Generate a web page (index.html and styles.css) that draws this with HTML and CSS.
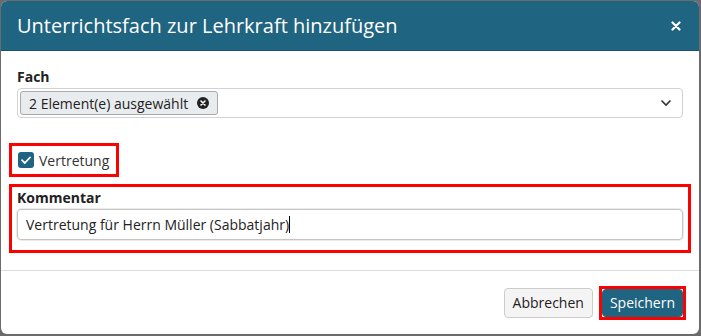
FILE: index.html
```html
<!DOCTYPE html>
<html>

<head>
  <meta charset="UTF-8">
  <title>Unterrichtsfach zur Lehrkraft hinzufügen</title>
  <link rel="stylesheet" href="styles.css">
</head>

<body>
  <div class="modal">
    <div class="modal-header">
      <h4 class="modal-title">Unterrichtsfach zur Lehrkraft hinzufügen</h4>
      <svg class="close" width="10" height="10" viewBox="0 0 10 10">
        <path d="M1.5 1.5 L8.5 8.5 M8.5 1.5 L1.5 8.5" stroke="#fff" stroke-width="2.2" stroke-linecap="round"/>
      </svg>
    </div>

    <div class="modal-body">
      <!-- Fach -->
      <div class="form-group">
        <label class="label">Fach</label>
        <div class="select">
          <span class="chip">2 Element(e) ausgewählt
            <svg class="chip-remove" width="12" height="12" viewBox="0 0 12 12">
              <circle cx="6" cy="6" r="6" fill="#222"/>
              <path d="M4 4 L8 8 M8 4 L4 8" stroke="#fff" stroke-width="1.6" stroke-linecap="round"/>
            </svg>
          </span>
          <svg class="caret" width="12" height="8" viewBox="0 0 12 8">
            <path d="M1.5 1.5 L6 6 L10.5 1.5" fill="none" stroke="#333" stroke-width="1.6"/>
          </svg>
        </div>
      </div>

      <!-- Vertretung -->
      <div class="check-row">
        <div class="mark check-group">
          <span class="checkbox">
            <svg width="16" height="16" viewBox="0 0 16 16">
              <path d="M4 8.2 L6.8 11 L12 5.5" fill="none" stroke="#fff" stroke-width="1.8" stroke-linecap="round" stroke-linejoin="round"/>
            </svg>
          </span>
          <span class="check-label">Vertretung</span>
        </div>
      </div>

      <!-- Kommentar -->
      <div class="mark comment-group">
        <label class="label">Kommentar</label>
        <div class="input">Vertretung für Herrn Müller (Sabbatjahr)<span class="cursor"></span></div>
      </div>
    </div>

    <div class="modal-footer">
      <button class="btn btn-default">Abbrechen</button>
      <span class="mark save-mark"><button class="btn btn-primary">Speichern</button></span>
    </div>
  </div>
</body>

</html>
```

FILE: styles.css
```css
body {
  font-family: "Open Sans", Arial, sans-serif;
  background-color: #6b6b6b;
  margin: 0;
  padding: 0;
}

.modal {
  margin: 1px;
  width: 698px;
  height: 333px;
  background-color: #fff;
  border-radius: 6px;
  overflow: hidden;
  display: flex;
  flex-direction: column;
}

.modal-header {
  background-color: #1f6480;
  height: 49px;
  border-bottom: 1px solid #1a546b;
  display: flex;
  align-items: center;
  justify-content: space-between;
  padding: 0 18px 0 16px;
}

.modal-title {
  margin: 0;
  color: #fff;
  font-size: 20px;
  font-weight: normal;
}

.modal-body {
  padding: 16px 8px 0 8px;
  height: 203px;
  border-bottom: 1px solid #ddd;
}

.label {
  display: block;
  font-size: 14px;
  font-weight: bold;
  color: #222;
  line-height: 20px;
  margin-bottom: 1px;
}

.form-group {
  padding: 0 8px;
}

.select {
  height: 28px;
  border: 1px solid #d2d2d2;
  border-radius: 4px;
  display: flex;
  align-items: center;
  justify-content: space-between;
  padding: 0 10px 0 2px;
}

.chip {
  display: flex;
  align-items: center;
  gap: 9px;
  height: 22px;
  padding: 0 8px 0 8px;
  background-color: #e9ecef;
  border: 1px solid #a9a9a9;
  border-radius: 3px;
  font-size: 14px;
  color: #222;
}

.mark {
  border: 3px solid #ff0000;
}

.check-row {
  display: flex;
  margin-top: 25px;
}

.check-group {
  display: flex;
  align-items: center;
  gap: 5px;
  height: 28px;
  padding: 0 7px 0 6px;
}

.checkbox {
  width: 16px;
  height: 16px;
  border-radius: 3px;
  background-color: #1f6480;
  display: flex;
}

.check-label {
  font-size: 14px;
  color: #333;
}

.comment-group {
  margin-top: 7px;
  padding: 1px 5px 10px 5px;
}

.input {
  height: 29px;
  border: 1px solid #c4c4c4;
  border-radius: 4px;
  box-shadow: 0 0 0 1px #ececec;
  display: flex;
  align-items: center;
  padding: 0 8px;
  font-size: 14px;
  color: #222;
}

.cursor {
  display: inline-block;
  width: 1px;
  height: 17px;
  background-color: #000;
}

.modal-footer {
  flex: 1;
  display: flex;
  justify-content: flex-end;
  align-items: center;
  gap: 6px;
  padding: 0 13px 0 0;
}

.btn {
  font-family: "Open Sans", Arial, sans-serif;
  font-size: 14px;
  height: 30px;
  padding: 0 8px;
  border-radius: 4px;
  cursor: pointer;
}

.btn-default {
  background-color: #f4f4f4;
  border: 1px solid #ccc;
  color: #222;
}

.save-mark {
  display: flex;
}

.btn-primary {
  background-color: #1f6480;
  border: 1px solid #1f6480;
  color: #fff;
  height: 28px;
  padding: 0 7px;
}
```
